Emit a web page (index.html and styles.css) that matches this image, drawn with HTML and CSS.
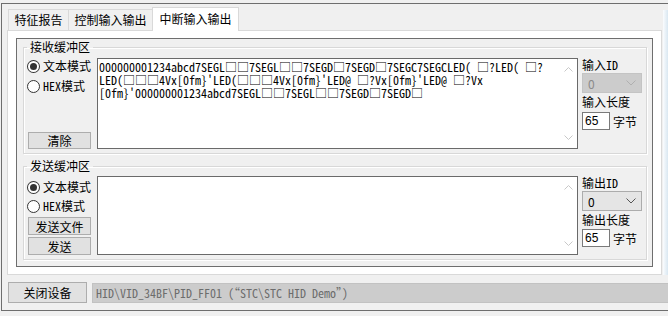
FILE: index.html
```html
<!DOCTYPE html>
<html lang="zh-CN">
<head>
<meta charset="UTF-8">
<title>HID 中断输入输出</title>
<link rel="stylesheet" href="styles.css">
</head>
<body>
<div class="frame">
    <div class="tabs">
        <div class="tab tab-a">特征报告</div>
        <div class="tab tab-b">控制输入输出</div>
        <div class="tab tab-c active">中断输入输出</div>
    </div>
    <div class="pane">
        <div class="panel">
            <!-- receive buffer -->
            <fieldset class="group rx-group">
                <legend>接收缓冲区</legend>
                <div class="group-body">
                    <div class="mode-col">
                        <div class="radio checked"><span class="circle"></span>文本模式</div>
                        <div class="radio second"><span class="circle"></span><span class="latin">HEX</span>模式</div>
                        <div class="btn-stack">
                            <button class="btn">清除</button>
                        </div>
                    </div>
                    <div class="textbox rx-box">
                        <div class="text">
                            <div class="line">000000001234abcd7SEGL□□7SEGL□□7SEGD□7SEGD□7SEGC7SEGCLED( □?LED( □?</div>
                            <div class="line">LED(□□□4Vx[0fm}'LED(□□□4Vx[0fm}'LED@ □?Vx[0fm}'LED@ □?Vx</div>
                            <div class="line">[0fm}'000000001234abcd7SEGL□□7SEGL□□7SEGD□7SEGD□</div>
                        </div>
                        <div class="scroll">
                            <svg width="9" height="5" viewBox="0 0 9 5"><path d="M0.5 4.5 L4.5 0.5 L8.5 4.5" fill="none" stroke="#c8c8c8"/></svg>
                            <svg width="9" height="5" viewBox="0 0 9 5"><path d="M0.5 0.5 L4.5 4.5 L8.5 0.5" fill="none" stroke="#c8c8c8"/></svg>
                        </div>
                    </div>
                    <div class="side-col">
                        <div class="label">输入<span class="latin">ID</span></div>
                        <div class="combo disabled">
                            <span>0</span>
                            <svg width="10" height="6" viewBox="0 0 10 6"><path d="M0.5 0.5 L5 5 L9.5 0.5" fill="none" stroke="#b0b0b0"/></svg>
                        </div>
                        <div class="label label-len">输入长度</div>
                        <div class="len-row"><div class="num">65</div>字节</div>
                    </div>
                </div>
            </fieldset>

            <!-- send buffer -->
            <fieldset class="group tx-group">
                <legend>发送缓冲区</legend>
                <div class="group-body">
                    <div class="mode-col">
                        <div class="radio checked"><span class="circle"></span>文本模式</div>
                        <div class="radio second"><span class="circle"></span><span class="latin">HEX</span>模式</div>
                        <div class="btn-stack">
                            <button class="btn">发送文件</button>
                            <button class="btn">发送</button>
                        </div>
                    </div>
                    <div class="textbox tx-box">
                        <div class="text"></div>
                        <div class="scroll">
                            <svg width="9" height="5" viewBox="0 0 9 5"><path d="M0.5 4.5 L4.5 0.5 L8.5 4.5" fill="none" stroke="#c8c8c8"/></svg>
                            <svg width="9" height="5" viewBox="0 0 9 5"><path d="M0.5 0.5 L4.5 4.5 L8.5 0.5" fill="none" stroke="#c8c8c8"/></svg>
                        </div>
                    </div>
                    <div class="side-col">
                        <div class="label">输出<span class="latin">ID</span></div>
                        <div class="combo">
                            <span>0</span>
                            <svg width="10" height="6" viewBox="0 0 10 6"><path d="M0.5 0.5 L5 5 L9.5 0.5" fill="none" stroke="#555"/></svg>
                        </div>
                        <div class="label label-len">输出长度</div>
                        <div class="len-row"><div class="num">65</div>字节</div>
                    </div>
                </div>
            </fieldset>
        </div>
    </div>
    <div class="bottom">
        <button class="btn close-btn">关闭设备</button>
        <div class="status">HID\VID_34BF\PID_FF01 (“STC\STC HID Demo”)</div>
    </div>
</div>
<div class="edge"></div>
</body>
</html>
```

FILE: styles.css
```css
* {
    box-sizing: border-box;
}

body {
    margin: 0;
    width: 668px;
    height: 316px;
    overflow: hidden;
    position: relative;
    background: #f0f0f0;
    font-family: "Noto Sans CJK SC", sans-serif;
    font-size: 12px;
    color: #000;
}

.latin,
.text,
.status {
    font-family: "Noto Sans Mono CJK SC", "Liberation Mono", monospace;
}

.frame {
    margin: 3px 0 0 1px;
    width: 700px;
    height: 308px;
    border: 1px solid #6e6e6e;
}

/* Tabs */
.tabs {
    display: flex;
    align-items: flex-end;
    height: 26px;
    padding-left: 6px;
}

.tab {
    height: 21px;
    line-height: 19px;
    border: 1px solid #d9d9d9;
    border-bottom: none;
    border-right: none;
    text-align: center;
    background: #f0f0f0;
}

.tab-a { width: 60px; }
.tab-b { width: 84px; }
.tab-c { width: 87px; }

.tab.active {
    height: 24px;
    margin-bottom: -1px;
    padding-top: 1px;
    line-height: 20px;
    border-right: 1px solid #d9d9d9;
    background: #fff;
    position: relative;
    z-index: 1;
}

.pane {
    margin-left: 5px;
    width: 655px;
    height: 245px;
    background: #fff;
    border: 1px solid #d9d9d9;
    padding: 7px 0 0 8px;
}

.panel {
    width: 637px;
    height: 229px;
    border: 1px solid #6e6e6e;
    background: #f0f0f0;
    padding: 1px 0 0 6px;
}

/* Group boxes */
.group {
    margin: 0;
    width: 624px;
    padding: 4px 4px 4px 3px;
    border: 1px solid #d8d8d8;
    box-shadow: inset 1px 1px 0 #fff, 1px 1px 0 #fff;
}

.tx-group {
    margin-top: 5px;
    padding-top: 3px;
}

.group legend {
    padding: 0 3px;
    line-height: 14px;
    font-size: 12px;
}

.group-body {
    display: flex;
}

.mode-col {
    width: 64px;
    display: flex;
    flex-direction: column;
    padding-top: 1px;
}

.tx-group .mode-col {
    padding-top: 4px;
}

.radio {
    display: flex;
    align-items: center;
    height: 14px;
    line-height: 14px;
    white-space: nowrap;
}

.radio.second {
    margin-top: 6px;
}

.tx-group .radio.second {
    margin-top: 5px;
}

.circle {
    width: 13px;
    height: 13px;
    margin-right: 3px;
    border: 1px solid #333;
    border-radius: 50%;
    background: #fff;
    display: flex;
    align-items: center;
    justify-content: center;
}

.radio.checked .circle::after {
    content: "";
    width: 7px;
    height: 7px;
    border-radius: 50%;
    background: #333;
}

.btn-stack {
    margin-top: auto;
    display: flex;
    flex-direction: column;
    gap: 2px;
    padding-left: 1px;
}

.btn {
    width: 63px;
    height: 17px;
    padding: 0;
    font-family: "Noto Sans CJK SC", sans-serif;
    font-size: 12px;
    line-height: 15px;
    color: #000;
    background: #e1e1e1;
    border: 1px solid #adadad;
    border-radius: 0;
}

.tx-group .btn {
    height: 18px;
}

/* Text boxes */
.textbox {
    margin-left: 6px;
    width: 481px;
    background: #fff;
    border: 1px solid #6a6a6a;
    display: flex;
}

.rx-box {
    height: 91px;
}

.tx-box {
    height: 79px;
}

.text {
    flex: 1;
    padding: 1px 1px 0;
    font-size: 12px;
}

.line {
    height: 13px;
    line-height: 13px;
    white-space: nowrap;
}

.scroll {
    width: 17px;
    display: flex;
    flex-direction: column;
    justify-content: space-between;
    align-items: center;
    padding: 8px 1px 8px 0;
}

/* Right column */
.side-col {
    margin-left: 4px;
    width: 60px;
    display: flex;
    flex-direction: column;
}

.label {
    height: 14px;
    line-height: 14px;
    white-space: nowrap;
}

.combo {
    margin-top: 1px;
    height: 20px;
    padding: 0 5px 0 5px;
    display: flex;
    align-items: center;
    justify-content: space-between;
    background: #e5e5e5;
    border: 1px solid #acacac;
}

.combo.disabled {
    background: #cccccc;
    border-color: #c4c4c4;
    color: #8a8a8a;
}

.label-len {
    margin-top: 2px;
}

.len-row {
    margin-top: 3px;
    display: flex;
    align-items: center;
    gap: 3px;
}

.tx-group .len-row {
    margin-top: 2px;
}

.num {
    width: 28px;
    height: 18px;
    line-height: 16px;
    padding-left: 2px;
    background: #fff;
    border: 1px solid #7a7a7a;
    font-family: "Liberation Sans", sans-serif;
}

/* Bottom row */
.bottom {
    display: flex;
    align-items: center;
    margin-top: 7px;
    padding-left: 6px;
    gap: 5px;
}

.close-btn {
    width: 79px;
    height: 21px;
    line-height: 19px;
}

.status {
    flex: 1;
    height: 20px;
    line-height: 18px;
    padding-left: 3px;
    background: #cccccc;
    border: 1px solid #c2c2c2;
    color: #6d6d6d;
    font-size: 12px;
    white-space: nowrap;
}

/* strip of the neighbouring window at the right edge */
.edge {
    position: absolute;
    top: 10px;
    right: 0;
    width: 5px;
    height: 265px;
    background: linear-gradient(to right, #fafcfe, #d9e7f1);
}
```
